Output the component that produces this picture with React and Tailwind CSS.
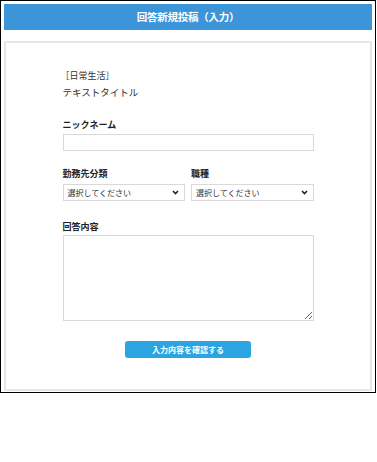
export default function App() {
  const font = { fontFamily: '"Noto Sans CJK JP", "Noto Sans", sans-serif' }

  return (
    <div style={font} className="w-[377px] h-[462px] bg-white">
      <div className="w-[376px] h-[393px] border border-black px-[3px] pt-[3px] flex flex-col">
        {/* ヘッダー */}
        <div className="h-[26px] bg-[#3b95d8] flex items-center justify-center">
          <h1 className="text-white text-[10.5px] font-bold tracking-tight">回答新規投稿（入力）</h1>
        </div>

        {/* フォーム */}
        <div className="mt-[11px] h-[350px] border-2 border-[#e6e6e6] flex justify-center">
          <div className="w-[251px] pt-[27px]">
            <p className="text-[9px] text-[#333] leading-[12px] -ml-[2px]">［日常生活］</p>
            <p className="text-[9.5px] text-[#333] leading-[12px] mt-[4px]">テキストタイトル</p>

            <label className="block mt-[21px] text-[9px] font-bold text-[#222] leading-[12px]">ニックネーム</label>
            <input className="block mt-[3px] w-full h-[17px] border border-[#d9d9d9] outline-none" />

            <div className="mt-[17px] flex gap-[6px]">
              <div className="flex-1">
                <label className="block text-[9px] font-bold text-[#222] leading-[12px]">勤務先分類</label>
                <Select />
              </div>
              <div className="flex-1">
                <label className="block text-[9px] font-bold text-[#222] leading-[12px]">職種</label>
                <Select />
              </div>
            </div>

            <label className="block mt-[20px] text-[9px] font-bold text-[#222] leading-[12px]">回答内容</label>
            <textarea className="block mt-[2px] w-full h-[86px] border border-[#d9d9d9] outline-none" />

            <div className="mt-[20px] flex justify-center">
              <button className="w-[126px] h-[17px] rounded-[3px] bg-[#2aa5e2] text-white text-[8px] font-bold">
                入力内容を確認する
              </button>
            </div>
          </div>
        </div>
      </div>
    </div>
  )
}

function Select() {
  return (
    <div className="mt-[4px] relative h-[17px] border border-[#d9d9d9] flex items-center pl-[4px]">
      <span className="text-[8px] text-[#333]">選択してください</span>
      <svg className="absolute right-[5px] top-[5px]" width="7" height="5" viewBox="0 0 7 5">
        <path d="M1 1 L3.5 3.5 L6 1" stroke="#222" strokeWidth="1.6" fill="none" />
      </svg>
    </div>
  )
}
